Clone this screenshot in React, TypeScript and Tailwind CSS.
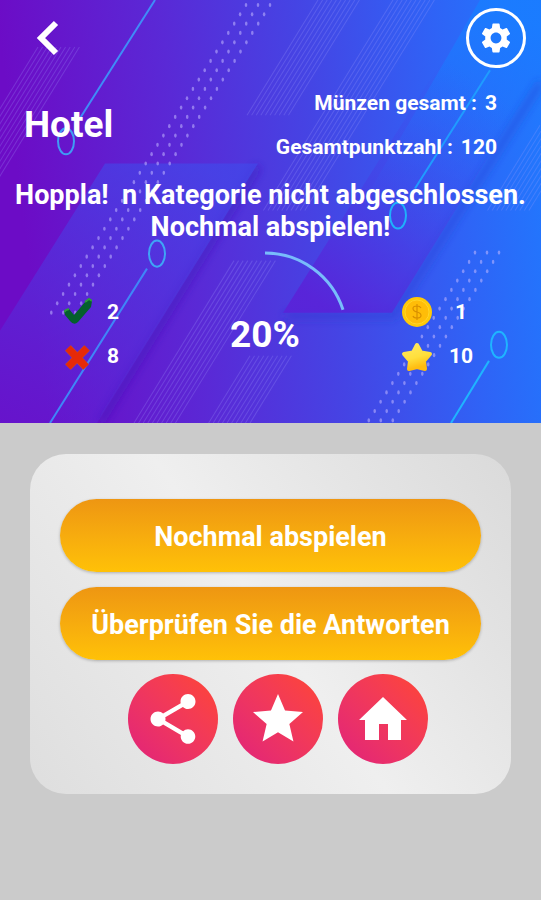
import { MdSettings, MdShare, MdStar } from "react-icons/md";

const hatchBands = [
  { x: 38, top: 47, bottom: 180 },
  { x: 318, top: 0, bottom: 115 },
  { x: 393, top: 0, bottom: 210 },
  { x: 234, top: 260, bottom: 422 },
  { x: 250, top: 355, bottom: 422 },
  { x: 540, top: 125, bottom: 210 },
];

const dotTrails = [
  { x: 246, y: 5, rows: 34 },
  { x: 475, y: 252, rows: 19 },
];

function HeaderBackground() {
  return (
    <svg
      className="absolute inset-0 h-full w-full"
      viewBox="0 0 541 422"
      preserveAspectRatio="none"
      aria-hidden="true"
    >
      <defs>
        <linearGradient id="base" x1="0" y1="0.1" x2="1" y2="0">
          <stop offset="0" stopColor="#6c0cc6" />
          <stop offset="0.3" stopColor="#5a29d6" />
          <stop offset="0.55" stopColor="#4544e4" />
          <stop offset="0.8" stopColor="#2f63f6" />
          <stop offset="1" stopColor="#1f7bff" />
        </linearGradient>
        <linearGradient id="bandLeft" x1="0.8" y1="0" x2="0.2" y2="1">
          <stop offset="0" stopColor="#4248ea" stopOpacity="0.7" />
          <stop offset="0.6" stopColor="#5430dc" stopOpacity="0.6" />
          <stop offset="1" stopColor="#5a25d8" stopOpacity="0.3" />
        </linearGradient>
        <linearGradient id="bandMiddle" x1="0.2" y1="1" x2="0.65" y2="0.2">
          <stop offset="0" stopColor="#5a22d8" stopOpacity="0.9" />
          <stop offset="0.4" stopColor="#4a38e2" stopOpacity="0.6" />
          <stop offset="1" stopColor="#3a50ee" stopOpacity="0" />
        </linearGradient>
        <linearGradient id="bandRight" x1="0.5" y1="0" x2="0.3" y2="1">
          <stop offset="0" stopColor="#1a7cff" stopOpacity="0.9" />
          <stop offset="1" stopColor="#2b68fa" stopOpacity="0" />
        </linearGradient>
        <filter id="soft" x="-20%" y="-20%" width="140%" height="140%">
          <feGaussianBlur stdDeviation="4" />
        </filter>
      </defs>

      <rect width="541" height="422" fill="url(#base)" />
      <path d="M258 166 100 422" stroke="#3a18b8" strokeOpacity="0.5" strokeWidth="8" filter="url(#soft)" />
      <path d="M105 163H258L97 422H-60L0 330Z" fill="url(#bandLeft)" />
      <path d="M480 0H541V75L420 265 370 190Z" fill="url(#bandRight)" />
      <path d="M285 315H393L541 82" fill="none" stroke="#2338c8" strokeOpacity="0.4" strokeWidth="7" filter="url(#soft)" />
      <path d="M283 312H392L541 72V0H480Z" fill="url(#bandMiddle)" />

      <g stroke="#a9a4ff" strokeOpacity="0.24" strokeWidth="1">
        {hatchBands.map((band) =>
          Array.from({ length: 10 }, (_, i) => {
            const x = band.x + i * 4.6;
            const shift = (band.bottom - band.top) / 1.62;
            return (
              <line key={`${band.x}-${i}`} x1={x} y1={band.top} x2={x - shift} y2={band.bottom} />
            );
          })
        )}
      </g>

      <g fill="#c3b8ff" fillOpacity="0.55">
        {dotTrails.map((trail) =>
          Array.from({ length: trail.rows * 3 }, (_, i) => {
            const row = Math.floor(i / 3);
            return (
              <ellipse
                key={`${trail.x}-${i}`}
                cx={trail.x + (i % 3) * 12 - row * 5.9}
                cy={trail.y + row * 9.3}
                rx="1.3"
                ry="2.1"
              />
            );
          })
        )}
      </g>

      <g fill="none" strokeWidth="2">
        <path d="M155 0 80 118" stroke="#3f8cf8" />
        <ellipse cx="66" cy="141" rx="8" ry="13" stroke="#3f9cf4" />
        <path d="M147 268 50 422" stroke="#3f86f8" />
        <ellipse cx="157" cy="253" rx="8" ry="13" stroke="#3fa4f6" />
        <path d="M490 70 415 188" stroke="#1f9cff" />
        <ellipse cx="398" cy="215" rx="8" ry="13" stroke="#1fb0fb" />
        <path d="M489 360 451 422" stroke="#1fb4ff" />
        <ellipse cx="499" cy="344" rx="8" ry="13" stroke="#1fb4ff" />
      </g>
    </svg>
  );
}

function CheckIcon() {
  return (
    <svg className="h-8 w-7" viewBox="0 0 28 32" aria-label="Richtig" role="img">
      <path d="M0 14 5 12 10 18 22 4 26 2 28 4 27 10 14 25Q10 29 6 24L1 18Z" fill="#04602d" />
      <path d="M21 5 25 2 28 4M0 15 2 13 5 12" fill="none" stroke="#2e9a3c" strokeWidth="2" />
    </svg>
  );
}

function CrossIcon() {
  return (
    <svg className="h-8 w-7" viewBox="0 0 28 32" aria-label="Falsch" role="img">
      <path d="M4 7 22 26M23 7 4 26" fill="none" stroke="#b8523c" strokeWidth="8" />
      <path d="M4 7 22 26M23 7 4 26" fill="none" stroke="#e62a08" strokeWidth="7" />
    </svg>
  );
}

function CoinIcon() {
  return (
    <svg className="h-8 w-8" viewBox="0 0 32 32" aria-label="Münzen" role="img">
      <circle cx="16" cy="15" r="15" fill="#ffc907" />
      <circle cx="16" cy="15" r="12" fill="#ffbd08" stroke="#ffd42a" strokeWidth="1" />
      <path
        d="M20 11Q19 9 16 9 12 9 12 11.500 12 14 16 15 20 16 20 18.500 20 21 16 21 12.500 21 12 19M16 7V23"
        fill="none"
        stroke="#d99000"
        strokeWidth="1.200"
      />
    </svg>
  );
}

function PointsIcon() {
  return (
    <svg className="h-8 w-8" viewBox="0 0 32 32" aria-label="Punkte" role="img">
      <defs>
        <linearGradient id="gold" x1="0" y1="0" x2="0.3" y2="1">
          <stop offset="0" stopColor="#ffe860" />
          <stop offset="0.6" stopColor="#ffdf3c" />
          <stop offset="1" stopColor="#ffbc10" />
        </linearGradient>
      </defs>
      <path
        d="M16 4 20 11.500 29 13 23 20 24 28 16 26 8 28 9 20 3 13 12 11.500Z"
        fill="url(#gold)"
        stroke="url(#gold)"
        strokeWidth="4"
        strokeLinejoin="round"
      />
    </svg>
  );
}

function HomeIcon({ size }: { size: number }) {
  return (
    <svg width={size} height={size} viewBox="0 0 60 60" fill="currentColor" aria-hidden="true">
      <path d="M30 8 54 31H48V51H35V35H26V51H12V31H6Z" />
    </svg>
  );
}

function ScoreGauge({ percent }: { percent: number }) {
  return (
    <div className="grid size-[168px] place-items-center">
      <svg className="col-start-1 row-start-1 size-full -rotate-90" viewBox="0 0 168 168" aria-hidden="true">
        <circle
          cx="84"
          cy="84"
          r="82"
          fill="none"
          stroke="#78bcfb"
          strokeWidth="3"
          pathLength="100"
          strokeDasharray={`${percent} 100`}
        />
      </svg>
      <span className="col-start-1 row-start-1 text-[37px] font-bold">{percent}%</span>
    </div>
  );
}

const results = [
  { icon: <CheckIcon />, value: 2 },
  { icon: <CrossIcon />, value: 8 },
];

const rewards = [
  { icon: <CoinIcon />, value: 1 },
  { icon: <PointsIcon />, value: 10 },
];

const mainActions = ["Nochmal abspielen", "Überprüfen Sie die Antworten"];

const roundActions = [
  { label: "Teilen", Icon: MdShare },
  { label: "Bewerten", Icon: MdStar },
  { label: "Startseite", Icon: HomeIcon },
];

export default function App() {
  return (
    <main className="min-h-screen bg-[#cbcbcb] font-['Roboto',sans-serif] text-white">
      <header className="relative overflow-hidden">
        <HeaderBackground />

        <div className="relative pb-1">
          <div className="flex items-center justify-between px-[15px] pt-2">
            <button type="button" aria-label="Zurück" className="flex h-[60px] w-[66px] items-center justify-center">
              <svg className="h-9 w-6" viewBox="0 0 24 36" aria-hidden="true">
                <path d="M20 3 5 18 20 33" fill="none" stroke="white" strokeWidth="6" />
              </svg>
            </button>
            <button
              type="button"
              aria-label="Einstellungen"
              className="flex size-[60px] items-center justify-center rounded-full border-[3px] border-white"
            >
              <MdSettings size={36} />
            </button>
          </div>

          <div className="mt-[13px] flex items-center justify-between pr-11 pl-6">
            <h1 className="text-[37px] leading-[44px] font-bold">Hotel</h1>
            <dl className="text-[21px] leading-[44px] font-bold">
              <div className="flex justify-end gap-2">
                <dt>Münzen gesamt :</dt>
                <dd>3</dd>
              </div>
              <div className="flex justify-end gap-2">
                <dt>Gesamtpunktzahl :</dt>
                <dd>120</dd>
              </div>
            </dl>
          </div>

          <p className="mt-[10px] text-center text-[27px] leading-8 font-bold">
            Hoppla!&nbsp; n Kategorie nicht abgeschlossen.
            <br />
            Nochmal abspielen!
          </p>

          <div className="mt-2 flex items-center justify-between px-16">
            <ul>
              {results.map((item, index) => (
                <li key={index} className="flex h-11 items-center gap-[5px]">
                  {item.icon}
                  <span className="w-8 text-center text-[21px] font-bold">{item.value}</span>
                </li>
              ))}
            </ul>
            <ScoreGauge percent={20} />
            <ul>
              {rewards.map((item, index) => (
                <li key={index} className="flex h-11 items-center gap-3">
                  {item.icon}
                  <span className="w-8 text-center text-[21px] font-bold">{item.value}</span>
                </li>
              ))}
            </ul>
          </div>
        </div>
      </header>

      <section className="mx-[30px] mt-[31px] rounded-[36px] bg-[linear-gradient(55deg,#dedede,#efefef_50%,#dadada)] px-[30px] pt-[45px] pb-[30px]">
        <div className="flex flex-col gap-[15px]">
          {mainActions.map((label) => (
            <button
              key={label}
              type="button"
              className="h-[73px] rounded-full bg-linear-to-b from-[#ee9612] to-[#ffc107] pt-1 text-[27px] font-bold shadow-[0_1px_3px_rgba(0,0,0,0.25)]"
            >
              {label}
            </button>
          ))}
        </div>

        <div className="mt-[14px] flex justify-center">
          {roundActions.map(({ label, Icon }) => (
            <button
              key={label}
              type="button"
              aria-label={label}
              className="ml-[15px] flex size-[90px] items-center justify-center rounded-full bg-linear-to-tr from-[#e1207a] to-[#ff4630]"
            >
              <Icon size={60} />
            </button>
          ))}
        </div>
      </section>
    </main>
  );
}
